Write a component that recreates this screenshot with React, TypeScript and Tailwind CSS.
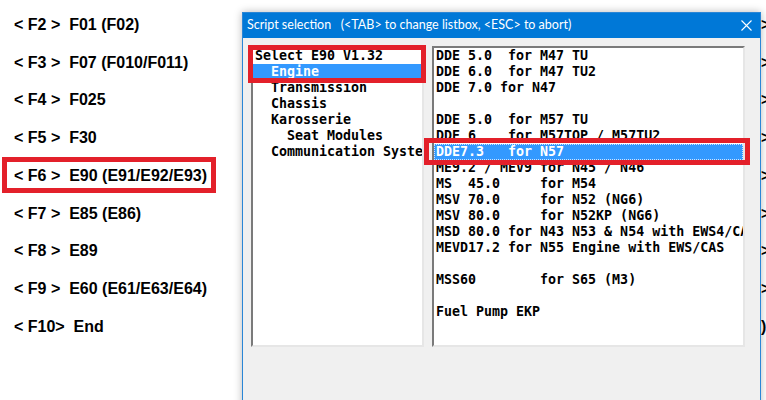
import React from "react";

const menu = [
  "< F2 >  F01 (F02)",
  "< F3 >  F07 (F010/F011)",
  "< F4 >  F025",
  "< F5 >  F30",
  "< F6 >  E90 (E91/E92/E93)",
  "< F7 >  E85 (E86)",
  "< F8 >  E89",
  "< F9 >  E60 (E61/E63/E64)",
  "< F10>  End",
];

const edge = [">", ">", ">", ">", ">", ">", ">", ">", ")"];

const leftItems = [
  "Select E90 V1.32",
  "  Engine",
  "  Transmission",
  "  Chassis",
  "  Karosserie",
  "    Seat Modules",
  "  Communication System",
];

const rightItems = [
  "DDE 5.0  for M47 TU",
  "DDE 6.0  for M47 TU2",
  "DDE 7.0 for N47",
  "",
  "DDE 5.0  for M57 TU",
  "DDE 6    for M57TOP / M57TU2",
  "DDE7.3   for N57",
  "ME9.2 / MEV9 for N45 / N46",
  "MS  45.0     for M54",
  "MSV 70.0     for N52 (NG6)",
  "MSV 80.0     for N52KP (NG6)",
  "MSD 80.0 for N43 N53 & N54 with EWS4/CAS",
  "MEVD17.2 for N55 Engine with EWS/CAS",
  "",
  "MSS60        for S65 (M3)",
  "",
  "Fuel Pump EKP",
];

export default function App() {
  return (
    <div className="relative w-[766px] h-[400px] bg-white overflow-hidden">
      <div className="flex font-['Liberation_Sans',Arial,sans-serif] font-bold text-[16px] text-black">
        <div className="w-[761px] shrink-0 pl-[14px] pt-[6px] flex flex-col">
          {menu.map((m) => (
            <div key={m} className="h-[37.75px] flex items-center whitespace-pre">
              {m}
            </div>
          ))}
        </div>
        <div className="pt-[6px] flex flex-col">
          {edge.map((m, i) => (
            <div key={i} className="h-[37.75px] flex items-center whitespace-pre">
              {m}
            </div>
          ))}
        </div>
      </div>

      {/* F6 highlight box */}
      <div className="absolute left-[2px] top-[157px] w-[214px] h-[36px] border-[5px] border-[#e3202a]" />

      {/* Dialog window */}
      <div className="absolute left-[242px] top-[12px] w-[519px] h-[400px] border border-[#2a86d6] bg-[#f0f0f0] shadow-[0_0_8px_rgba(0,0,0,0.28)] flex flex-col">
        <div className="h-[25px] bg-[#0078d7] flex items-center justify-between pl-[4px] pr-[8px] text-white text-[12.5px] font-['Lato',sans-serif] whitespace-pre">
          <span>{"Script selection   (<TAB> to change listbox, <ESC> to abort)"}</span>
          <svg width="11" height="11" viewBox="0 0 11 11">
            <path d="M0.5 0.5 L10.5 10.5 M10.5 0.5 L0.5 10.5" stroke="white" strokeWidth="1.1" fill="none" />
          </svg>
        </div>
        <div className="flex gap-[8px] pl-[8px] pt-[8px] font-['DejaVu_Sans_Mono',monospace] font-bold text-[13.3px] text-black">
          <div className="w-[173px] h-[301px] bg-white border-2 border-t-[#7a7a7a] border-l-[#7a7a7a] border-r-[#e6e6e6] border-b-[#e6e6e6] overflow-hidden">
            {leftItems.map((t, i) => (
              <div
                key={i}
                className={
                  "h-[16px] leading-[16px] pl-[2px] whitespace-pre overflow-hidden " +
                  (i === 1 ? "bg-[#3399ff] text-white" : "")
                }
              >
                {t}
              </div>
            ))}
          </div>
          <div className="w-[313px] h-[301px] bg-white border-2 border-t-[#7a7a7a] border-l-[#7a7a7a] border-r-[#e6e6e6] border-b-[#e6e6e6] overflow-hidden">
            {rightItems.map((t, i) => (
              <div
                key={i}
                className={
                  "h-[16px] leading-[16px] pl-[2px] whitespace-pre overflow-hidden " +
                  (i === 6 ? "bg-[#3399ff] text-white outline-1 outline-dotted outline-[#cfe4ff] -outline-offset-1" : "")
                }
              >
                {t}
              </div>
            ))}
          </div>
        </div>
      </div>

      {/* Dialog highlight boxes */}
      <div className="absolute left-[248px] top-[45px] w-[178px] h-[38px] border-[5px] border-[#e3202a]" />
      <div className="absolute left-[424px] top-[138px] w-[326px] h-[27px] border-[5px] border-[#e3202a]" />
    </div>
  );
}
